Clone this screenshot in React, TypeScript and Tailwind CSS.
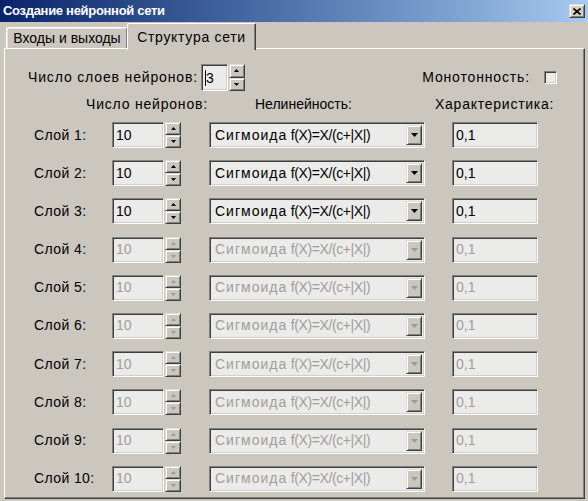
import React from "react";

const sunken =
  "border border-t-[#808080] border-l-[#808080] border-b-white border-r-white shadow-[inset_1px_1px_0_#404040,inset_-1px_-1px_0_#d4d0c8]";
const raised =
  "border border-t-[#dedad4] border-l-[#dedad4] border-b-[#404040] border-r-[#404040] shadow-[inset_1px_1px_0_#ffffff,inset_-1px_-1px_0_#808080]";

function Arrow({ up, color, w = 7, h = 4 }: { up?: boolean; color: string; w?: number; h?: number }) {
  return (
    <svg width={w} height={h} viewBox={`0 0 ${w} ${h}`}>
      {up ? (
        <path d={`M0 ${h}H${w}L${w / 2} 0Z`} fill={color} />
      ) : (
        <path d={`M0 0H${w}L${w / 2} ${h}Z`} fill={color} />
      )}
    </svg>
  );
}

function Spinner({ disabled, h }: { disabled?: boolean; h: string }) {
  const c = disabled ? "#9c9a96" : "#000";
  return (
    <div className={`flex flex-col w-[16px] ${h}`}>
      <div className={`flex-1 flex items-center justify-center bg-[#cbc7bf] ${raised}`}>
        <Arrow up color={c} w={5} h={3} />
      </div>
      <div className={`flex-1 flex items-center justify-center bg-[#cbc7bf] ${raised}`}>
        <Arrow color={c} w={5} h={3} />
      </div>
    </div>
  );
}

function Row({ n, disabled }: { n: number; disabled?: boolean }) {
  const tc = disabled ? "text-[#a09e9a]" : "text-black";
  return (
    <div className="flex items-center h-[26px] pl-[29px]">
      <span className="w-[78px] tracking-[0.4px]">Слой {n}:</span>
      <div className={`w-[52px] h-[26px] bg-[#ebebea] ${sunken} flex items-center pl-[3px] ${tc}`}>10</div>
      <div className="ml-[1px]">
        <Spinner disabled={disabled} h="h-[26px]" />
      </div>
      <div className={`ml-[28px] w-[216px] h-[26px] bg-[#ebebea] ${sunken} flex items-center p-[2px]`}>
        <span className={`flex-1 pl-[3px] ${tc} whitespace-nowrap`}>
          <span className="tracking-[1px]">Сигмоида</span>
          <span className="tracking-[-0.4px]"> f(X)=X/(c+|X|)</span>
        </span>
        <div className={`w-[16px] h-full flex items-center justify-center bg-[#cbc7bf] ${raised}`}>
          <Arrow color={disabled ? "#9c9a96" : "#000"} />
        </div>
      </div>
      <div className={`ml-[27px] w-[86px] h-[26px] bg-[#ebebea] ${sunken} flex items-center pl-[3px] ${tc}`}>0,1</div>
    </div>
  );
}

export default function App() {
  return (
    <div className="w-[588px] h-[501px] bg-[#cbc7bf] font-['Liberation_Sans',Arial,sans-serif] text-[14px] text-black overflow-hidden flex flex-col">
      <div className="h-[22px] shrink-0 bg-gradient-to-r from-[#0a246a] to-[#a6caf0] flex items-center justify-between pl-[3px] pr-[3px]">
        <span className="text-white font-bold text-[13px] tracking-[-0.3px]">Создание нейронной сети</span>
        <div className={`w-[16px] h-[14px] bg-[#d4d0c8] ${raised} flex items-center justify-center`}>
          <svg width="8" height="7" viewBox="0 0 8 7">
            <path d="M0.5 0.5L7.5 6.5M7.5 0.5L0.5 6.5" stroke="#000" strokeWidth="1.6" />
          </svg>
        </div>
      </div>
      <div className="h-[26px] shrink-0 flex items-end pl-[6px]">
        <div className="h-[21px] w-[122px] border-l border-t border-r border-l-white border-t-white border-r-[#404040] shadow-[inset_-1px_0_0_#808080,inset_1px_1px_0_#e8e6e2] rounded-t-[2px] flex items-center justify-center">
          Входы и выходы
        </div>
        <div className="relative z-10 h-[27px] mb-[-2px] w-[129px] bg-[#cbc7bf] border-l border-t border-r border-l-white border-t-white border-r-[#404040] shadow-[inset_-1px_0_0_#808080] rounded-t-[2px] flex items-start justify-center pt-[3px] ml-[-1px] tracking-[0.7px]">
          Структура сети
        </div>
      </div>
      <div className="flex-1 ml-[4px] mr-[3px] mb-[2px] border border-t-white border-l-white border-b-[#404040] border-r-[#404040] shadow-[inset_-1px_-1px_0_#808080] flex flex-col">
        <div className="mt-[15px] h-[27px] flex items-center justify-between pl-[23px] pr-[27px]">
          <div className="flex items-center">
            <span className="mr-[3px] tracking-[0.85px]">Число слоев нейронов:</span>
            <div className={`w-[27px] h-[27px] bg-[#ebebea] ${sunken} flex items-center pl-[3px]`}>
              <span className="w-[1px] h-[16px] bg-black" />
              <span className="leading-[16px]">3</span>
            </div>
            <div className="ml-[1px]">
              <Spinner h="h-[27px]" />
            </div>
          </div>
          <div className="flex items-center">
            <span className="mr-[14px] tracking-[0.85px]">Монотонность:</span>
            <div className={`w-[13px] h-[13px] bg-[#ebebea] ${sunken}`} />
          </div>
        </div>
        <div className="mt-[5px] h-[16px] leading-[16px] flex pl-[81px]">
          <span className="w-[169px] tracking-[0.8px]">Число нейронов:</span>
          <span className="w-[180px]">Нелинейность:</span>
          <span className="tracking-[0.75px]">Характеристика:</span>
        </div>
        <div className="mt-[10px] flex flex-col gap-[12.2px]">
          {[1, 2, 3, 4, 5, 6, 7, 8, 9, 10].map((n) => (
            <Row key={n} n={n} disabled={n > 3} />
          ))}
        </div>
      </div>
    </div>
  );
}
